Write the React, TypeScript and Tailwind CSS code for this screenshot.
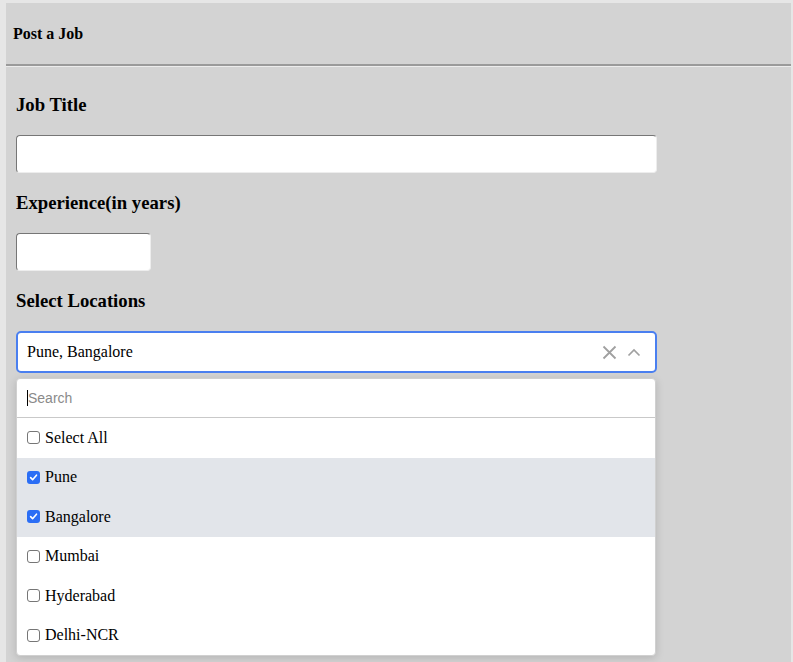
import { useState } from 'react'

const locations = ['Pune', 'Bangalore', 'Mumbai', 'Hyderabad', 'Delhi-NCR']

function Box({ checked }: { checked: boolean }) {
  if (checked) {
    return (
      <span className="w-[13px] h-[13px] rounded-[3px] bg-[#2b6ef5] flex items-center justify-center shrink-0">
        <svg width="9" height="9" viewBox="0 0 10 10" fill="none">
          <path d="M1.8 5.2 L4 7.4 L8.3 2.4" stroke="white" strokeWidth="1.8" strokeLinecap="round" strokeLinejoin="round" />
        </svg>
      </span>
    )
  }
  return <span className="w-[13px] h-[13px] rounded-[3px] bg-white border border-[#767676] shrink-0" />
}

export default function App() {
  const [selected] = useState<string[]>(['Pune', 'Bangalore'])

  return (
    <div className="min-h-screen bg-[#e6e6e6] pl-[6px] pt-[3px] pr-[2px]" style={{ fontFamily: '"Liberation Serif", serif' }}>
      <div className="bg-[#d3d3d3] min-h-[659px] text-black">
        {/* Header */}
        <div className="h-[61px] flex items-center px-[7px]">
          <h4 className="text-[16px] font-bold leading-[18px]">Post a Job</h4>
        </div>
        <div className="border-t-2 border-[#9a9a9a]" />
        <div className="border-t border-[#ececec]" />

        {/* Form */}
        <div className="pl-[10px] pt-[8px]">
          <h3 className="text-[18.72px] font-bold leading-[22px] my-[19px]">Job Title</h3>
          <input
            type="text"
            className="block w-[641px] h-[38px] bg-white rounded-[4px] border border-[#767676] border-r-[#ededed] border-b-[#ededed] outline-none"
          />

          <h3 className="text-[18.72px] font-bold leading-[22px] my-[19px]">Experience(in years)</h3>
          <input
            type="text"
            className="block w-[135px] h-[38px] bg-white rounded-[4px] border border-[#767676] border-r-[#ededed] border-b-[#ededed] outline-none"
          />

          <h3 className="text-[18.72px] font-bold leading-[22px] my-[19px]">Select Locations</h3>

          {/* Multi select */}
          <div className="w-[641px]">
            <div className="h-[42px] bg-white border-2 border-[#4a7ff0] rounded-[5px] flex items-center pl-[9px] pr-[14px]">
              <span className="flex-1 text-[16px]">{selected.join(', ')}</span>
              <svg width="15" height="15" viewBox="0 0 15 15" className="mr-[10px]">
                <path d="M1.5 1.5 L13.5 13.5 M13.5 1.5 L1.5 13.5" stroke="#a0a0a0" strokeWidth="1.8" />
              </svg>
              <svg width="14" height="9" viewBox="0 0 14 9">
                <path d="M1.5 7.5 L7 2 L12.5 7.5" stroke="#a0a0a0" strokeWidth="1.7" fill="none" />
              </svg>
            </div>

            <div className="mt-[5px] w-[640px] bg-white border border-[#d0d0d0] rounded-[4px] shadow-[0_2px_8px_rgba(0,0,0,0.15)] overflow-hidden">
              <div className="h-[39px] flex items-center px-[10px] border-b border-[#c9c9c9]">
                <span className="w-px h-[16px] bg-black" />
                <span className="text-[14px] text-[#8a8a8a]" style={{ fontFamily: '"Liberation Sans", Arial, sans-serif' }}>
                  Search
                </span>
              </div>
              <div className="h-[39.5px] flex items-center gap-[5px] px-[10px]">
                <Box checked={false} />
                <span className="text-[16px]">Select All</span>
              </div>
              {locations.map((loc) => {
                const on = selected.includes(loc)
                return (
                  <div key={loc} className={`h-[39.5px] flex items-center gap-[5px] px-[10px] ${on ? 'bg-[#e2e5ea]' : ''}`}>
                    <Box checked={on} />
                    <span className="text-[16px]">{loc}</span>
                  </div>
                )
              })}
            </div>
          </div>
        </div>
      </div>
    </div>
  )
}
